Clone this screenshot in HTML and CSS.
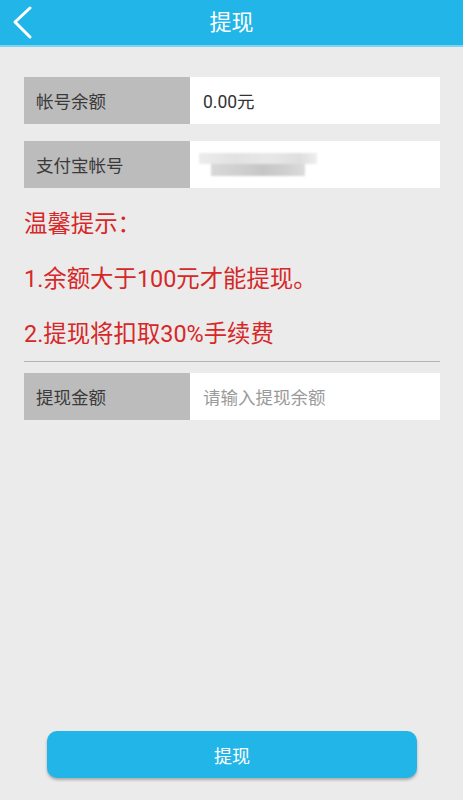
FILE: index.html
```html
<!DOCTYPE html>
<html lang="zh-CN">
<head>
<meta charset="utf-8">
<title>提现</title>
<link rel="stylesheet" href="styles.css">
</head>
<body>
<div class="page">
  <header class="topbar">
    <span class="back">
      <svg width="20" height="34" viewBox="0 0 20 34"><polyline points="17,2 2,16 17,31" fill="none" stroke="#ffffff" stroke-width="3" stroke-linecap="round" stroke-linejoin="round"/></svg>
    </span>
    <h1 class="title">提现</h1>
  </header>
  <main class="content">
    <div class="row">
      <div class="label">帐号余额</div>
      <div class="value">0.00元</div>
    </div>
    <div class="row row-gap">
      <div class="label">支付宝帐号</div>
      <div class="value"><span class="blur"><span class="blur-top"></span><span class="blur-bottom"></span></span></div>
    </div>
    <div class="tips">
      <p>温馨提示：</p>
      <p>1.余额大于100元才能提现。</p>
      <p>2.提现将扣取30%手续费</p>
    </div>
    <div class="divider"></div>
    <div class="row">
      <div class="label">提现金额</div>
      <div class="value placeholder">请输入提现余额</div>
    </div>
  </main>
  <div class="footer">
    <button class="submit">提现</button>
  </div>
</div>
</body>
</html>
```
FILE: styles.css
```css
html, body {
  margin: 0;
  padding: 0;
}
body {
  background: #ebebeb;
  font-family: Roboto, "Noto Sans CJK SC", "Noto Sans", sans-serif;
}
.page {
  min-height: 800px;
  display: flex;
  flex-direction: column;
}
.topbar {
  height: 45px;
  background: #22b5e8;
  border-bottom: 2px solid #7fd3f0;
  display: flex;
  align-items: center;
  justify-content: center;
  position: relative;
}
.back {
  position: absolute;
  left: 13px;
  top: 6px;
  display: flex;
}
.title {
  margin: 0;
  font-size: 22px;
  font-weight: 400;
  color: #ffffff;
  line-height: 1;
  margin-top: 1px;
}
.content {
  padding: 30px 23px 0 24px;
}
.row {
  display: flex;
  height: 47px;
  background: #ffffff;
}
.row-gap {
  margin-top: 17px;
}
.label {
  width: 154px;
  padding-left: 12px;
  background: #bcbcbc;
  color: #3a3a3a;
  font-size: 17.5px;
  display: flex;
  align-items: center;
}
.value {
  flex: 1;
  padding-left: 13px;
  color: #333333;
  font-size: 17.5px;
  display: flex;
  align-items: center;
}
.placeholder {
  color: #9a9a9a;
}
.blur {
  width: 118px;
  height: 23px;
  margin-left: -4px;
  display: flex;
  flex-direction: column;
  filter: blur(1px);
}
.blur-top {
  height: 11px;
  background: linear-gradient(90deg, #ececec, #e2e2e2 30%, #e8e8e8 60%, #dedede 85%, #eeeeee);
}
.blur-bottom {
  height: 12px;
  margin: 0 12px;
  background: linear-gradient(90deg, #d8d8d8, #cccccc 40%, #c6c6c6 55%, #d0d0d0 80%, #dcdcdc);
}
.tips {
  margin-top: 9px;
  color: #d62828;
  font-size: 23.4px;
}
.tips p {
  margin: 0;
  line-height: 55px;
}
.divider {
  height: 1px;
  background: #b4b4b4;
  margin-top: -1px;
  margin-bottom: 11px;
}
.footer {
  margin-top: auto;
  padding-bottom: 22px;
  display: flex;
  justify-content: center;
}
.submit {
  width: 370px;
  height: 47px;
  margin-left: 1px;
  border: none;
  border-radius: 10px;
  background: #22b5e8;
  color: #ffffff;
  font-family: inherit;
  font-size: 18px;
  box-shadow: 0 2px 3px rgba(0, 0, 0, 0.28);
}
```
